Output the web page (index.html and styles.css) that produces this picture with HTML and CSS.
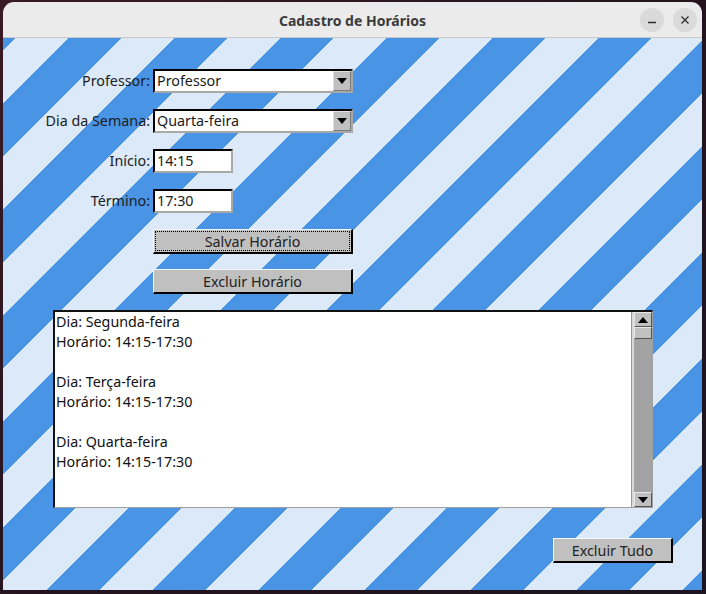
FILE: index.html
```html
<!DOCTYPE html>
<html lang="pt-BR">
<head>
<meta charset="utf-8">
<title>Cadastro de Horários</title>
<link rel="stylesheet" href="styles.css">
</head>
<body>
<div class="window">
  <header class="titlebar">
    <span></span>
    <span class="title">Cadastro de Horários</span>
    <div class="controls">
      <span class="wbtn"><svg width="10" height="10" viewBox="0 0 10 10"><line x1="1" y1="7.5" x2="9" y2="7.5" stroke="#2e2e2e" stroke-width="1.4"/></svg></span>
      <span class="wbtn"><svg width="10" height="10" viewBox="0 0 10 10"><path d="M1.5 1.5 L8.5 8.5 M8.5 1.5 L1.5 8.5" stroke="#2e2e2e" stroke-width="1.3" fill="none"/></svg></span>
    </div>
  </header>
  <main class="content">
    <div class="form">
      <span class="lbl">Professor:</span>
      <div class="combo"><span class="field-text">Professor</span><span class="combo-arrow"><svg width="10" height="6" viewBox="0 0 10 6"><path d="M0 0 H10 L5 6 Z" fill="#000"/></svg></span></div>
      <span class="lbl">Dia da Semana:</span>
      <div class="combo"><span class="field-text">Quarta-feira</span><span class="combo-arrow"><svg width="10" height="6" viewBox="0 0 10 6"><path d="M0 0 H10 L5 6 Z" fill="#000"/></svg></span></div>
      <span class="lbl">Início:</span>
      <div class="entry"><span class="field-text">14:15</span></div>
      <span class="lbl">Término:</span>
      <div class="entry"><span class="field-text">17:30</span></div>
      <span></span>
      <div class="btn btn-wide focused"><span class="focus-ring">Salvar Horário</span></div>
      <span></span>
      <div class="btn btn-wide"><span class="focus-ring none">Excluir Horário</span></div>
    </div>
    <div class="listbox">
      <div class="list-text">Dia: Segunda-feira<br>Horário: 14:15-17:30<br><br>Dia: Terça-feira<br>Horário: 14:15-17:30<br><br>Dia: Quarta-feira<br>Horário: 14:15-17:30</div>
      <div class="scrollbar">
        <span class="sb-btn"><svg width="10" height="6" viewBox="0 0 10 6"><path d="M0 6 H10 L5 0 Z" fill="#000"/></svg></span>
        <span class="sb-thumb"></span>
        <span class="sb-trough"></span>
        <span class="sb-btn"><svg width="10" height="6" viewBox="0 0 10 6"><path d="M0 0 H10 L5 6 Z" fill="#000"/></svg></span>
      </div>
    </div>
    <div class="footer">
      <div class="btn btn-all"><span class="focus-ring none">Excluir Tudo</span></div>
    </div>
  </main>
</div>
</body>
</html>
```
FILE: styles.css
```css
html, body {
  margin: 0;
  padding: 0;
}
body {
  width: 706px;
  height: 594px;
  overflow: hidden;
  background: linear-gradient(135deg, #3a1a24 0%, #24141f 50%, #1c1420 100%);
  font-family: "Noto Sans", "DejaVu Sans", sans-serif;
  font-size: 14.3px;
  color: #1b1b1b;
}
.window {
  margin: 2px 0 0 3px;
  width: 699px;
  height: 588px;
  border-radius: 11px 11px 0 0;
  overflow: hidden;
  display: flex;
  flex-direction: column;
}
.titlebar {
  height: 35px;
  flex: none;
  background: #ebebeb;
  border-bottom: 1px solid #c9c9c9;
  display: grid;
  grid-template-columns: 1fr auto 1fr;
  align-items: center;
}
.title {
  font-weight: bold;
  font-size: 14px;
  color: #3a3a3a;
  padding-top: 1px;
}
.controls {
  justify-self: end;
  display: flex;
  gap: 9px;
  padding-right: 5px;
}
.wbtn {
  width: 24px;
  height: 24px;
  border-radius: 50%;
  background: #dadada;
  display: flex;
  align-items: center;
  justify-content: center;
}
.content {
  flex: 1;
  padding-top: 31px;
  background: repeating-linear-gradient(135deg,
    #4a94e6 0px, #4a94e6 8.5px,
    #dbe9f8 8.5px, #dbe9f8 46px,
    #4a94e6 46px, #4a94e6 75px);
}
.form {
  display: grid;
  grid-template-columns: 147px auto;
  column-gap: 3px;
  row-gap: 16px;
  grid-auto-rows: 24px;
  align-items: center;
  justify-content: start;
}
.lbl {
  text-align: right;
  line-height: 24px;
  white-space: nowrap;
}
.field-text {
  padding-left: 2px;
  line-height: 20px;
}
.combo {
  box-sizing: border-box;
  width: 200px;
  height: 24px;
  background: #fff;
  border-top: 2px solid #000;
  border-left: 2px solid #000;
  border-right: 2px solid #a8a8a8;
  border-bottom: 2px solid #a8a8a8;
  display: flex;
  align-items: center;
  justify-content: space-between;
}
.combo-arrow {
  box-sizing: border-box;
  width: 18px;
  height: 20px;
  background: #c0c0c0;
  border-top: 1px solid #e2e2e2;
  border-left: 1px solid #e2e2e2;
  border-right: 1px solid #7a7a7a;
  border-bottom: 1px solid #7a7a7a;
  display: flex;
  align-items: center;
  justify-content: center;
}
.entry {
  box-sizing: border-box;
  width: 80px;
  height: 24px;
  background: #fff;
  border-top: 2px solid #000;
  border-left: 2px solid #000;
  border-right: 2px solid #a8a8a8;
  border-bottom: 2px solid #a8a8a8;
  display: flex;
  align-items: center;
}
.btn {
  box-sizing: border-box;
  height: 25px;
  background: #c0c0c0;
  border-top: 1px solid #f4f8fc;
  border-left: 1px solid #f4f8fc;
  border-right: 2px solid #000;
  border-bottom: 2px solid #000;
  display: flex;
  align-items: stretch;
  justify-content: stretch;
  padding: 1px;
  color: #222;
}
.btn-wide {
  width: 200px;
  align-self: start;
}
.focus-ring {
  flex: 1;
  display: flex;
  align-items: center;
  justify-content: center;
  border: 1px dotted #000;
}
.focus-ring.none {
  border-color: transparent;
}
.listbox {
  box-sizing: border-box;
  margin: 17px 0 0 50px;
  width: 600px;
  height: 198px;
  border-top: 2px solid #111;
  border-left: 2px solid #111;
  border-right: 1px solid #a0a0a0;
  border-bottom: 1px solid #a0a0a0;
  display: flex;
  background: #d9d9d9;
}
.list-text {
  flex: 1;
  background: #fff;
  padding-left: 1px;
  margin-right: 2px;
  border-right: 1px solid #9a9a9a;
  line-height: 20px;
  color: #111;
}
.scrollbar {
  width: 18px;
  display: flex;
  flex-direction: column;
  background: #a3a3a3;
}
.sb-btn {
  box-sizing: border-box;
  height: 15px;
  background: #c0c0c0;
  border-top: 1px solid #e6e6e6;
  border-left: 1px solid #e6e6e6;
  border-right: 1px solid #555;
  border-bottom: 1px solid #555;
  display: flex;
  align-items: center;
  justify-content: center;
}
.sb-thumb {
  box-sizing: border-box;
  height: 12px;
  background: #c0c0c0;
  border-top: 1px solid #e6e6e6;
  border-left: 1px solid #e6e6e6;
  border-right: 1px solid #555;
  border-bottom: 1px solid #555;
}
.sb-trough {
  flex: 1;
}
.footer {
  display: flex;
  justify-content: flex-end;
  margin-top: 30px;
  padding-right: 29px;
}
.btn-all {
  width: 120px;
}
```
